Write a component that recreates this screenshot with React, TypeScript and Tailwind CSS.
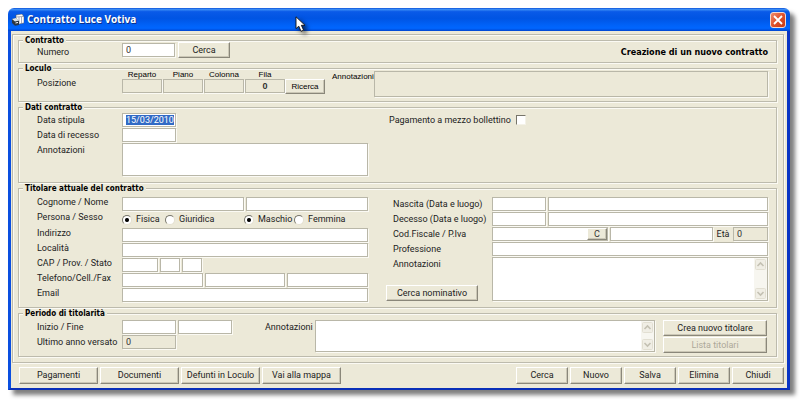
import type { ReactNode } from 'react'
import clsx from 'clsx'

const box = 'h-3.5 min-w-0 rounded-none border border-[#b9b7a8] bg-white px-[3px] text-[9px] leading-3 text-[#333] shadow-[1px_1px_0_#fbfaf4] outline-none'
const flat = 'h-3.5 min-w-0 rounded-none border border-[#b9b7a8] bg-[#ece9d8] px-[3px] text-[9px] leading-3 text-[#333] shadow-[1px_1px_0_#fbfaf4] outline-none'
const bold = "font-['DejaVu_Sans_Condensed','DejaVu_Sans',sans-serif] font-bold"
const small = "font-['Liberation_Sans',sans-serif] text-[8px] text-black"

function Input({ id, label, value, className, readOnly }: { id?: string; label?: string; value?: string; className?: string; readOnly?: boolean }) {
  return (
    <input
      id={id}
      type="text"
      aria-label={label}
      defaultValue={value}
      readOnly={readOnly}
      className={clsx(readOnly ? flat : box, className)}
    />
  )
}

function Button({ children, className, disabled }: { children: ReactNode; className?: string; disabled?: boolean }) {
  return (
    <button
      type="button"
      disabled={disabled}
      className={clsx(
        'flex shrink-0 items-center justify-center whitespace-nowrap border border-t-white border-l-white border-r-[#8a877a] border-b-[#8a877a] bg-[#ece9d8] shadow-[inset_-1px_-1px_0_#cbc7b6] disabled:text-[#aca899]',
        className
      )}
    >
      {children}
    </button>
  )
}

function Group({ title, children }: { title: string; children: ReactNode }) {
  return (
    <fieldset className="min-w-0 border border-[#bdbbad] shadow-[1px_1px_0_#fbfaf4,inset_1px_1px_0_#fbfaf4]">
      <legend className={clsx(bold, 'ml-1 h-[3px] bg-[#ece9d8] px-0.5 text-[8px] leading-[3px] text-black')}>{title}</legend>
      {children}
    </fieldset>
  )
}

/* Label and its boxes, the label column is 85px on the left side and 99px on the right */
function Row({ label, id, wide, high, children }: { label: string; id: string; wide?: boolean; high?: boolean; children: ReactNode }) {
  return (
    <div className="flex items-start">
      <label
        htmlFor={id}
        className={clsx('shrink-0 whitespace-nowrap', wide ? 'w-[99px]' : 'w-[85px]', high ? 'leading-[11px]' : 'leading-[14px]')}
      >
        {label}
      </label>
      <div className="flex min-w-0 flex-1 gap-0.5">{children}</div>
    </div>
  )
}

function Radio({ name, label, checked, className }: { name: string; label: string; checked?: boolean; className?: string }) {
  return (
    <label className={clsx('flex items-center gap-1', className)}>
      <input
        type="radio"
        name={name}
        defaultChecked={checked}
        className="size-2.5 shrink-0 appearance-none rounded-full border border-t-[#77756a] border-r-[#e3e0d0] border-b-[#e3e0d0] border-l-[#77756a] bg-white checked:bg-[radial-gradient(circle,#000_0_1.5px,#fff_2.5px)]"
      />
      {label}
    </label>
  )
}

/* Text area with the disabled XP scroll bar next to it */
function ScrollArea({ id, className }: { id: string; className: string }) {
  return (
    <div className={clsx('flex min-w-0 flex-1 border border-[#b9b7a8] bg-white shadow-[1px_1px_0_#fbfaf4]', className)}>
      <textarea id={id} className="min-w-0 flex-1 resize-none px-1 outline-none" />
      <div className="flex w-[13px] flex-col justify-between bg-[#f7f6f0] p-px">
        <Arrow d="M2.5 7 5.5 4 8.5 7" />
        <Arrow d="M2.5 4 5.5 7 8.5 4" />
      </div>
    </div>
  )
}

function Arrow({ d }: { d: string }) {
  return (
    <svg viewBox="0 0 11 11" className="size-[11px]">
      <rect x="0.5" y="0.5" width="10" height="10" rx="1" fill="#f0eee5" stroke="#e2dfd2" />
      <path d={d} fill="none" stroke="#c4c1b3" strokeWidth="1.6" />
    </svg>
  )
}

function TitleBar() {
  return (
    <header className="relative flex h-[23px] items-center rounded-t-md bg-[linear-gradient(#0a4fd8_0%,#3b8df5_6%,#0a5ae8_16%,#0054e3_45%,#0062f8_75%,#0066ff_88%,#0046d0_100%)] pr-1 pl-1">
      <svg viewBox="0 0 12 12" className="size-3">
        <path d="M4 1 10 0 12 3v6l-5 1-3-3z" fill="#fff" stroke="#555" strokeWidth="0.5" />
        <path d="M4 3 12 2.4M7 3v6M9.5 3v6" stroke="#889" strokeWidth="0.7" />
        <path d="M0 5 4 4 7 7v4l-4 .8L0 9z" fill="#2d3742" />
        <path d="M0 5 4 4 7 6.5 3 7.5z" fill="#dfe6ea" />
        <path d="M3.5 9 6 8.5" stroke="#fff" />
      </svg>
      <h1 className="ml-[3px] font-['Open_Sans',sans-serif] text-[10px] font-bold text-white [text-shadow:1px_1px_0_#0b2f8a]">Contratto Luce Votiva</h1>
      <button
        type="button"
        aria-label="Chiudi finestra"
        className="ml-auto flex size-4 items-center justify-center rounded-[3px] border border-[#f3d9d0] bg-linear-to-br from-[#ee8a69] via-[#e0502a] to-[#c43a14]"
      >
        <svg viewBox="0 0 10 10" className="size-2.5">
          <path d="M1 1 9 9M9 1 1 9" stroke="#fff" strokeWidth="1.8" />
        </svg>
      </button>
      <svg viewBox="0 0 20 24" className="absolute top-2 left-[287px] h-6 w-5 drop-shadow-[3px_3px_2px_rgba(0,0,0,0.6)]">
        <path d="M1 0.8V12.6L3.8 10.2 6 15.3 8.6 14.2 6.4 9.3H10z" fill="#fff" stroke="#111" strokeWidth="0.9" />
      </svg>
    </header>
  )
}

export default function App() {
  return (
    <div className="min-h-screen bg-white pt-2 pr-2.5 pb-2.5 pl-2 font-[Roboto,sans-serif] text-[9px] leading-[11px] text-[#222]">
      <div className="rounded-t-md shadow-[5px_5px_4px_rgba(0,0,0,0.5)]">
        <TitleBar />
        <form className="border-r-[3px] border-b-2 border-l-[3px] border-r-[#0a35c4] border-b-[#0a2fb8] border-l-[#0a4fe0] bg-[#ece9d8] pt-[3px] pr-[3px] pb-1 pl-px">
          <main className="flex flex-col gap-1 border border-[#bdbbad] pt-1 pr-1.5 pb-[5px] pl-[5px] shadow-[1px_1px_0_#fbfaf4,inset_1px_1px_0_#fbfaf4]">
            <Group title="Contratto">
              <div className="flex h-5 items-start pr-2 pl-[18px]">
                <label htmlFor="numero" className="w-[85px] shrink-0 pt-[5px]">Numero</label>
                <input id="numero" type="text" defaultValue="0" className={clsx(box, 'mt-px w-[53px]')} />
                <Button className="ml-[3px] h-4 w-[52px]">Cerca</Button>
                <strong className={clsx(bold, 'ml-auto pt-[5px] text-[9px] text-black')}>Creazione di un nuovo contratto</strong>
              </div>
            </Group>

            <Group title="Loculo">
              <div className="flex h-[31px] items-start pr-2 pl-[18px]">
                <span className="w-[85px] shrink-0 pt-2">Posizione</span>
                <div className={clsx(small, 'flex gap-px leading-[9px]')}>
                  <label className="flex w-10 flex-col items-center">Reparto<Input readOnly className="w-full" /></label>
                  <label className="flex w-10 flex-col items-center">Piano<Input readOnly className="w-full" /></label>
                  <label className="flex w-10 flex-col items-center">Colonna<Input readOnly className="w-full" /></label>
                  <label className="flex w-10 flex-col items-center">Fila<Input readOnly value="0" className="w-full text-center font-bold" /></label>
                </div>
                <Button className={clsx(small, 'mt-[9px] h-[15px] w-10')}>Ricerca</Button>
                <label htmlFor="note-loculo" className={clsx(small, 'ml-[7px] w-[42px] pt-px')}>Annotazioni</label>
                <textarea id="note-loculo" readOnly className={clsx(flat, 'mt-px h-[26px] flex-1 resize-none')} />
              </div>
            </Group>

            <Group title="Dati contratto">
              <div className="flex pt-1 pr-2 pb-1.5 pl-[18px]">
                <div className="flex w-[331px] shrink-0 flex-col gap-px">
                  <Row label="Data stipula" id="stipula">
                    <span className={clsx(box, 'flex w-[54px] items-center')}>
                      <input id="stipula" type="text" defaultValue="15/03/2010" className="field-sizing-content h-2.5 bg-[#316ac5] text-white outline-none" />
                    </span>
                  </Row>
                  <Row label="Data di recesso" id="recesso"><Input id="recesso" className="w-[54px]" /></Row>
                  <Row label="Annotazioni" id="note-contratto">
                    <textarea id="note-contratto" className={clsx(box, 'h-[33px] flex-1 resize-none')} />
                  </Row>
                </div>
                <label className="ml-[21px] flex h-3.5 items-center gap-[5px] whitespace-nowrap">
                  Pagamento a mezzo bollettino
                  <input type="checkbox" className="size-2.5 appearance-none border border-t-[#77756a] border-r-[#f4f2e8] border-b-[#f4f2e8] border-l-[#77756a] bg-white" />
                </label>
              </div>
            </Group>

            <Group title="Titolare attuale del contratto">
              <div className="flex pt-[7px] pr-2 pb-[5px] pl-[18px]">
                <div className="flex w-[331px] shrink-0 flex-col gap-px">
                  <Row high label="Cognome / Nome" id="cognome">
                    <Input id="cognome" className="flex-1" />
                    <Input label="Nome" className="flex-1" />
                  </Row>
                  <div className="flex h-[15px]">
                    <span className="w-[85px] shrink-0">Persona / Sesso</span>
                    <Radio name="persona" label="Fisica" checked className="w-[43px]" />
                    <Radio name="persona" label="Giuridica" className="w-[79px]" />
                    <Radio name="sesso" label="Maschio" checked className="w-[50px]" />
                    <Radio name="sesso" label="Femmina" />
                  </div>
                  <Row high label="Indirizzo" id="indirizzo"><Input id="indirizzo" className="flex-1" /></Row>
                  <Row high label="Località" id="localita"><Input id="localita" className="flex-1" /></Row>
                  <Row high label="CAP / Prov. / Stato" id="cap">
                    <Input id="cap" className="w-9" />
                    <Input label="Provincia" className="w-5" />
                    <Input label="Stato" className="w-5" />
                  </Row>
                  <Row high label="Telefono/Cell./Fax" id="telefono">
                    <Input id="telefono" className="flex-1" />
                    <Input label="Cellulare" className="flex-1" />
                    <Input label="Fax" className="flex-1" />
                  </Row>
                  <Row high label="Email" id="email"><Input id="email" className="flex-1" /></Row>
                </div>

                <div className="ml-[25px] flex min-w-0 flex-1 flex-col gap-px">
                  <Row wide label="Nascita (Data e luogo)" id="nascita">
                    <Input id="nascita" className="w-[54px]" />
                    <Input label="Luogo di nascita" className="flex-1" />
                  </Row>
                  <Row wide label="Decesso (Data e luogo)" id="decesso">
                    <Input id="decesso" className="w-[54px]" />
                    <Input label="Luogo di decesso" className="flex-1" />
                  </Row>
                  <Row wide label="Cod.Fiscale / P.Iva" id="fiscale">
                    <div className={clsx(box, 'flex w-[116px] pr-0')}>
                      <input id="fiscale" type="text" className="min-w-0 flex-1 outline-none" />
                      <Button className="h-3 w-5">C</Button>
                    </div>
                    <Input label="Partita Iva" className="flex-1" />
                    <label htmlFor="eta" className="w-4 text-center leading-[14px]">Età</label>
                    <Input id="eta" value="0" readOnly className="w-[35px]" />
                  </Row>
                  <Row wide label="Professione" id="professione"><Input id="professione" className="flex-1" /></Row>
                  <div className="flex">
                    <div className="flex w-[99px] shrink-0 flex-col justify-between">
                      <label htmlFor="note-titolare" className="leading-[14px]">Annotazioni</label>
                      <Button className="-ml-[7px] h-4 w-[92px]">Cerca nominativo</Button>
                    </div>
                    <ScrollArea id="note-titolare" className="h-11" />
                  </div>
                </div>
              </div>
            </Group>

            <Group title="Periodo di titolarità">
              <div className="flex pt-[5px] pr-[9px] pb-[3px] pl-[18px]">
                <div className="flex w-[228px] shrink-0 flex-col gap-px">
                  <Row label="Inizio / Fine" id="inizio">
                    <Input id="inizio" className="w-[54px]" />
                    <Input label="Fine" className="w-[54px]" />
                  </Row>
                  <Row label="Ultimo anno versato" id="ultimo"><Input id="ultimo" value="0" readOnly className="w-[54px]" /></Row>
                </div>
                <label htmlFor="note-periodo" className="w-[50px] shrink-0 leading-[14px]">Annotazioni</label>
                <ScrollArea id="note-periodo" className="h-8" />
                <div className="ml-2 flex flex-col gap-px">
                  <Button className="h-4 w-[104px]">Crea nuovo titolare</Button>
                  <Button className="h-4 w-[104px]" disabled>Lista titolari</Button>
                </div>
              </div>
            </Group>
          </main>

          <footer className="flex justify-between pt-1 pl-[7px]">
            <div className="flex gap-0.5">
              <Button className="h-[17px] w-[79px]">Pagamenti</Button>
              <Button className="h-[17px] w-[79px]">Documenti</Button>
              <Button className="h-[17px] w-[79px]">Defunti in Loculo</Button>
              <Button className="h-[17px] w-[79px]">Vai alla mappa</Button>
            </div>
            <div className="flex gap-0.5">
              <Button className="h-[17px] w-[52px]">Cerca</Button>
              <Button className="h-[17px] w-[52px]">Nuovo</Button>
              <Button className="h-[17px] w-[52px]">Salva</Button>
              <Button className="h-[17px] w-[52px]">Elimina</Button>
              <Button className="h-[17px] w-[52px]">Chiudi</Button>
            </div>
          </footer>
        </form>
      </div>
    </div>
  )
}
